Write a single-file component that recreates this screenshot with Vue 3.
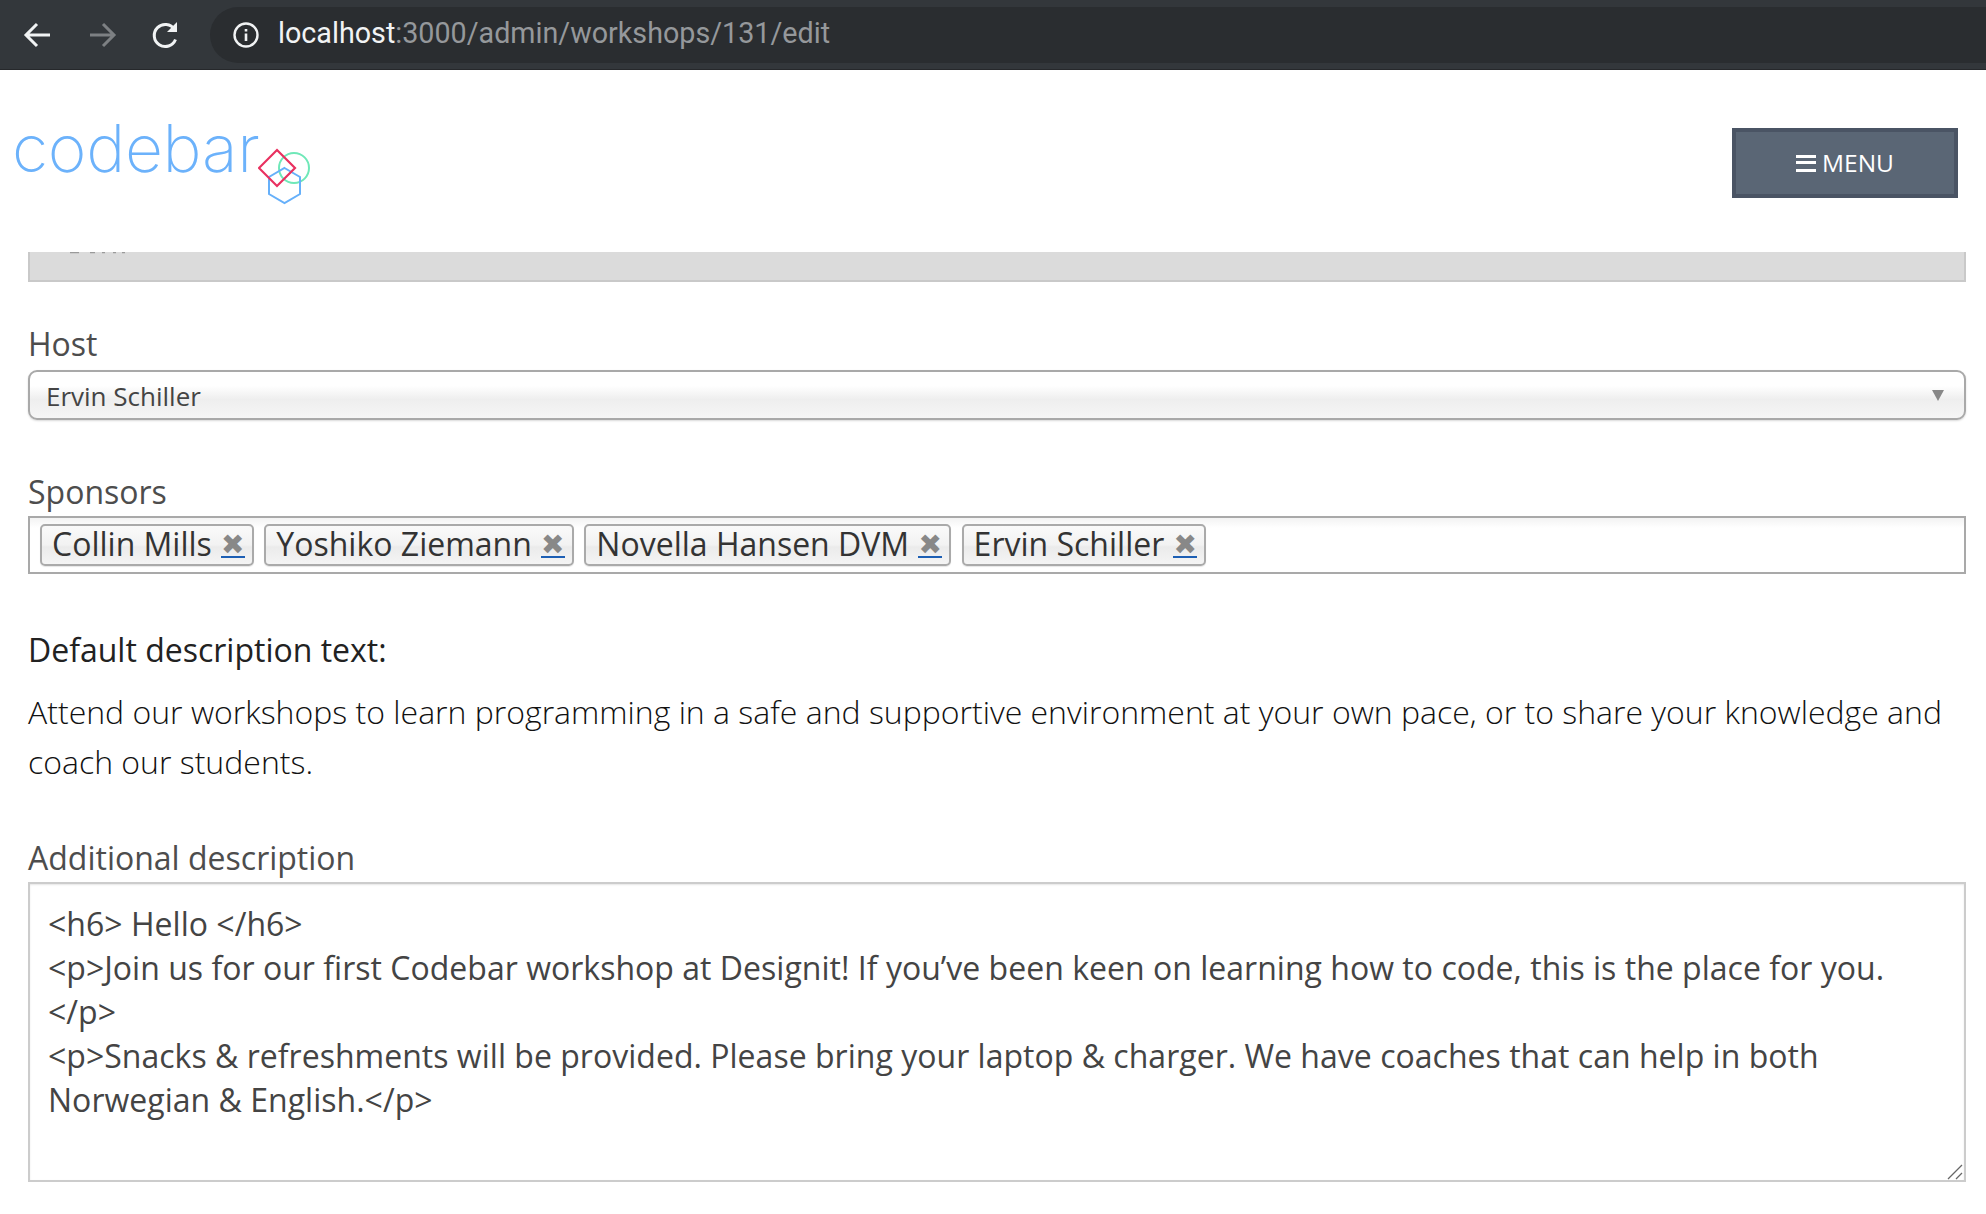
<template>
  <div class="page">
    <div class="browser-bar">
      <svg class="nav-icon" viewBox="0 0 32 32" width="32" height="32"><path d="M28 16H5M15 5 4 16l11 11" fill="none" stroke="#f1f3f4" stroke-width="3"/></svg>
      <svg class="nav-icon" viewBox="0 0 32 32" width="32" height="32"><path d="M4 16h23M17 5l11 11-11 11" fill="none" stroke="#7d8083" stroke-width="3"/></svg>
      <svg class="nav-icon" viewBox="0 0 32 32" width="32" height="32"><path d="M25.500 20.500a11 11 0 1 1-1-10" fill="none" stroke="#f1f3f4" stroke-width="3"/><path d="M27 3v10H17z" fill="#f1f3f4"/></svg>
      <div class="url-pill">
        <svg viewBox="0 0 28 28" width="28" height="28"><circle cx="14" cy="14" r="11.500" fill="none" stroke="#f1f3f4" stroke-width="2.400"/><path d="M12.700 12.500h2.600V20h-2.600zM12.700 8h2.600v2.600h-2.600z" fill="#f1f3f4"/></svg>
        <span class="url"><span class="host">localhost</span>:3000/admin/workshops/131/edit</span>
      </div>
    </div>

    <header class="top">
      <div class="logo">
        <span class="logo-text">codebar</span>
        <svg class="logo-mark" viewBox="0 0 54 58" width="54" height="58">
          <circle cx="36" cy="20" r="15" fill="none" stroke="#6fe8b8" stroke-width="2"/>
          <path d="M26.500 20 42 29v17l-15.500 9L11 46V29z" fill="none" stroke="#66b0fa" stroke-width="2"/>
          <path d="M19 2l18 18-18 18L1 20z" fill="none" stroke="#e9305f" stroke-width="2.200"/>
        </svg>
      </div>
      <button class="menu-btn"><span class="burger"></span>MENU</button>
    </header>

    <main class="content">
      <div class="clipped-input">
        <svg class="clipped-marks" viewBox="0 0 56 2" width="56" height="2"><path d="M0 .5h9M20 .5h5M32 .5h3M43 .5h3M52 .5h3" fill="none" stroke="#9a9a9a" stroke-width="1.500"/></svg>
      </div>

      <label class="field-label host-label">Host</label>
      <div class="select-box">
        <span>{{ host }}</span>
        <span class="arrow"></span>
      </div>

      <label class="field-label sponsors-label">Sponsors</label>
      <div class="chips">
        <span v-for="s in sponsors" :key="s" class="chip">
          {{ s }}
          <a class="chip-x" href="#">✖</a>
        </span>
      </div>

      <h4 class="default-title">Default description text:</h4>
      <p class="default-text">Attend our workshops to learn programming in a safe and supportive environment at your own pace, or to share your knowledge and coach our students.</p>

      <label class="field-label extra-label">Additional description</label>
      <div class="extra-wrap">
        <textarea class="extra" v-model="extra"></textarea>
        <svg class="grip" viewBox="0 0 16 16" width="16" height="16"><path d="M1 15 15 1M9 15l6-6" fill="none" stroke="#666" stroke-width="1.300"/></svg>
      </div>
    </main>
  </div>
</template>

<script setup>
import { ref } from 'vue'

const host = 'Ervin Schiller'
const sponsors = ['Collin Mills', 'Yoshiko Ziemann', 'Novella Hansen DVM', 'Ervin Schiller']
const extra = ref(`<h6> Hello </h6>
<p>Join us for our first Codebar workshop at Designit! If you’ve been keen on learning how to code, this is the place for you.</p>
<p>Snacks & refreshments will be provided. Please bring your laptop & charger. We have coaches that can help in both Norwegian & English.</p>`)
</script>

<style>
html, body { background: #fff; overflow: hidden; }
</style>

<style scoped>
.page {
  width: 1986px;
  height: 1214px;
  overflow: hidden;
  font-family: "Open Sans", "Liberation Sans", sans-serif;
  color: #4d4d4d;
}
.browser-bar {
  height: 70px;
  box-sizing: border-box;
  background: #33373b;
  border-bottom: 1px solid #26282b;
  display: flex;
  align-items: center;
  padding: 0 0 0 22px;
  gap: 32px;
}
.url-pill {
  flex: 1;
  height: 56px;
  margin-left: -4px;
  background: #2a2d30;
  border-radius: 28px 0 0 28px;
  display: flex;
  align-items: center;
  padding-left: 22px;
  gap: 18px;
}
.url {
  margin-top: -4px;
  font-family: Roboto, sans-serif;
  font-size: 28.700px;
  color: #95989b;
}
.host { color: #f1f3f4; }

.top {
  height: 182px;
  display: flex;
  align-items: flex-start;
  justify-content: space-between;
  padding: 0 28px 0 12px;
}
.logo {
  display: flex;
  align-items: flex-start;
  margin-top: 44px;
}
.logo-text {
  font-family: Inter, sans-serif;
  font-weight: 250;
  font-size: 66px;
  line-height: 68px;
  letter-spacing: -0.3px;
  color: #6cb2fb;
}
.logo-mark { margin: 34px 0 0 -1px; }
.menu-btn {
  margin-top: 58px;
  width: 226px;
  height: 70px;
  padding: 0 0 2px;
  background: #5a6675;
  border: 4px solid #4a5464;
  color: #fff;
  font-family: inherit;
  font-size: 24.500px;
  display: flex;
  align-items: center;
  justify-content: center;
  gap: 6px;
}
.burger {
  width: 20px;
  height: 17px;
  margin-top: 2px;
  border-top: 3.500px solid #fff;
  border-bottom: 3.500px solid #fff;
  position: relative;
  box-sizing: border-box;
}
.burger::after {
  content: "";
  position: absolute;
  left: 0;
  right: 0;
  top: 3.500px;
  height: 3px;
  background: #fff;
}

.content {
  padding: 0 20px 0 28px;
  display: flex;
  flex-direction: column;
}
.clipped-input {
  height: 29.500px;
  box-sizing: border-box;
  background: #dbdbdb;
  border: 2px solid #c9c9c9;
  border-top: 0;
  padding-left: 40px;
}
.clipped-marks { display: block; }
.field-label {
  display: block;
  font-size: 32px;
  line-height: 40px;
  color: #4d4d4d;
}
.host-label { margin-top: 42.500px; }
.select-box {
  margin-top: 6px;
  height: 50px;
  box-sizing: border-box;
  border: 2px solid #a9a9a9;
  border-radius: 9px;
  background: linear-gradient(#fff 0%, #fff 30%, #eee 60%, #f6f6f6 100%);
  box-shadow: 0 1px 2px rgba(0, 0, 0, 0.15);
  display: flex;
  align-items: center;
  justify-content: space-between;
  padding: 1px 20px 0 16px;
  font-size: 26px;
  color: #444;
}
.arrow {
  width: 0;
  height: 0;
  border-left: 6px solid transparent;
  border-right: 6px solid transparent;
  border-top: 11px solid #888;
}
.sponsors-label { margin-top: 52px; }
.chips {
  margin-top: 4px;
  height: 58px;
  box-sizing: border-box;
  border: 2px solid #a9a9a9;
  background: linear-gradient(#f3f3f3 0, #fff 10px);
  display: flex;
  align-items: center;
  gap: 10.500px;
  padding: 0 10px;
}
.chip {
  height: 42px;
  box-sizing: border-box;
  border: 2px solid #aaa;
  border-radius: 5px;
  background: linear-gradient(#fafafa 0%, #f2f2f2 50%, #ebebeb 55%, #f4f4f4 100%);
  box-shadow: 0 1px 1px rgba(0, 0, 0, 0.1);
  padding: 0 7px 3px 10px;
  display: flex;
  align-items: center;
  gap: 9px;
  font-size: 32px;
  color: #333;
  white-space: nowrap;
}
.chip-x {
  width: 24px;
  height: 25px;
  margin-top: 3px;
  box-sizing: border-box;
  text-align: center;
  color: #888;
  font-size: 28px;
  line-height: 23px;
  text-decoration: none;
  border-bottom: 2px solid #1d5fb4;
  font-family: "DejaVu Sans", sans-serif;
}
.default-title {
  margin: 53.500px 0 0;
  font-size: 32px;
  line-height: 44px;
  font-weight: 500;
  color: #222;
}
.default-text {
  margin: 15px 0 0;
  font-size: 32px;
  line-height: 50px;
  font-weight: 300;
  color: #111;
}
.extra-label { margin-top: 51px; }
.extra-wrap {
  margin-top: 4px;
  height: 300px;
  position: relative;
}
.extra {
  display: block;
  width: 100%;
  height: 100%;
  box-sizing: border-box;
  border: 2px solid #ccc;
  padding: 18px 18px;
  font-family: inherit;
  font-size: 32px;
  line-height: 44px;
  letter-spacing: 0.02px;
  color: #444;
  outline: none;
  resize: none;
  background: #fff;
  box-shadow: inset 0 1px 2px rgba(0, 0, 0, 0.1);
}
.grip {
  position: absolute;
  right: 3px;
  bottom: 2px;
}
</style>
